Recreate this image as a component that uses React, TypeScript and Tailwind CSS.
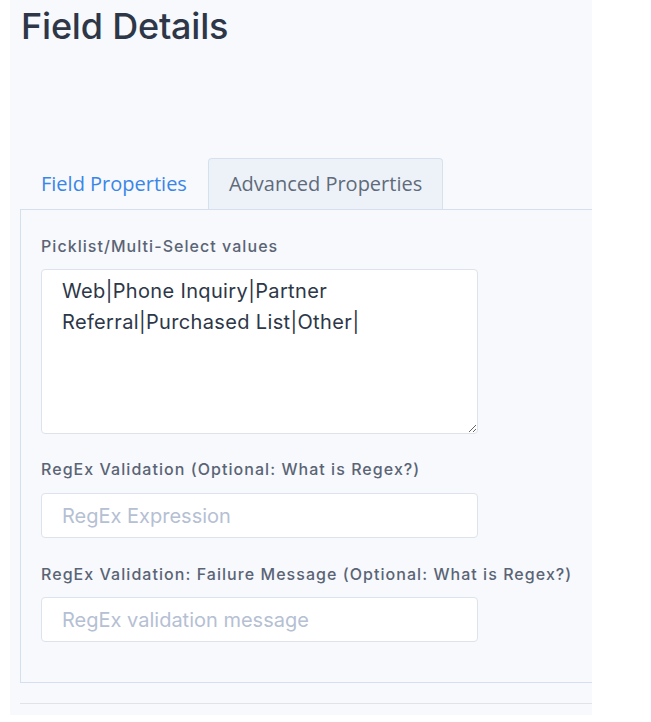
import React from "react";

const poppins = { fontFamily: '"Inter", "Noto Sans", sans-serif' };

export default function App() {
  return (
    <div className="min-h-[722px] w-[651px] bg-white">
      <div className="ml-[10px] h-[715px] w-[582px] overflow-hidden bg-[#f7f9fd] pl-[10px]">
        <h1
          className="pt-[4px] pl-[1px] text-[36px] leading-[44px] font-medium tracking-[-0.2px] text-[#2d3748]"
          style={poppins}
        >
          Field Details
        </h1>
        <div className="h-[110px]" />
        <div className="flex h-[51px] items-stretch" style={{ fontFamily: '"Open Sans", sans-serif' }}>
          <div className="flex items-center px-[21px] text-[20px] text-[#3a86e8]">Field Properties</div>
          <div className="flex items-center rounded-t-[4px] border border-b-0 border-[#d7e1ee] bg-[#edf2f9] px-[20px] text-[20px] text-[#5f6b7a]">
            Advanced Properties
          </div>
        </div>
        <div className="w-[620px] border border-[#d5dfed] pt-[24px] pb-[40px] pl-[20px]" style={poppins}>
          <div className="flex w-[437px] flex-col">
            <label className="text-[16px] leading-[24px] font-medium tracking-[1.05px] text-[#5a6475]">
              Picklist/Multi-Select values
            </label>
            <textarea
              className="mt-[11px] h-[165px] w-full resize-y rounded-[4px] border border-[#dde3ec] bg-white px-[20px] pt-[6px] text-[20px] leading-[31px] tracking-[0.35px] text-[#2d3748] outline-none"
              defaultValue="Web|Phone Inquiry|Partner Referral|Purchased List|Other|"
            />
            <label className="mt-[23px] text-[16px] leading-[24px] font-medium tracking-[1.05px] text-[#5a6475]">
              RegEx Validation (Optional: What is Regex?)
            </label>
            <input
              className="mt-[12px] h-[45px] w-full rounded-[4px] border border-[#dde3ec] bg-white px-[20px] text-[20px] text-[#2d3748] outline-none placeholder:text-[#b5c0d3]"
              placeholder="RegEx Expression"
            />
            <label className="mt-[24px] whitespace-nowrap text-[16px] leading-[24px] font-medium tracking-[1.05px] text-[#5a6475]">
              RegEx Validation: Failure Message (Optional: What is Regex?)
            </label>
            <input
              className="mt-[11px] h-[45px] w-full rounded-[4px] border border-[#dde3ec] bg-white px-[20px] text-[20px] text-[#2d3748] outline-none placeholder:text-[#b5c0d3]"
              placeholder="RegEx validation message"
            />
          </div>
        </div>
        <div className="mt-[20px] h-[1px] w-full bg-[#dfe3ea]" />
      </div>
    </div>
  );
}
